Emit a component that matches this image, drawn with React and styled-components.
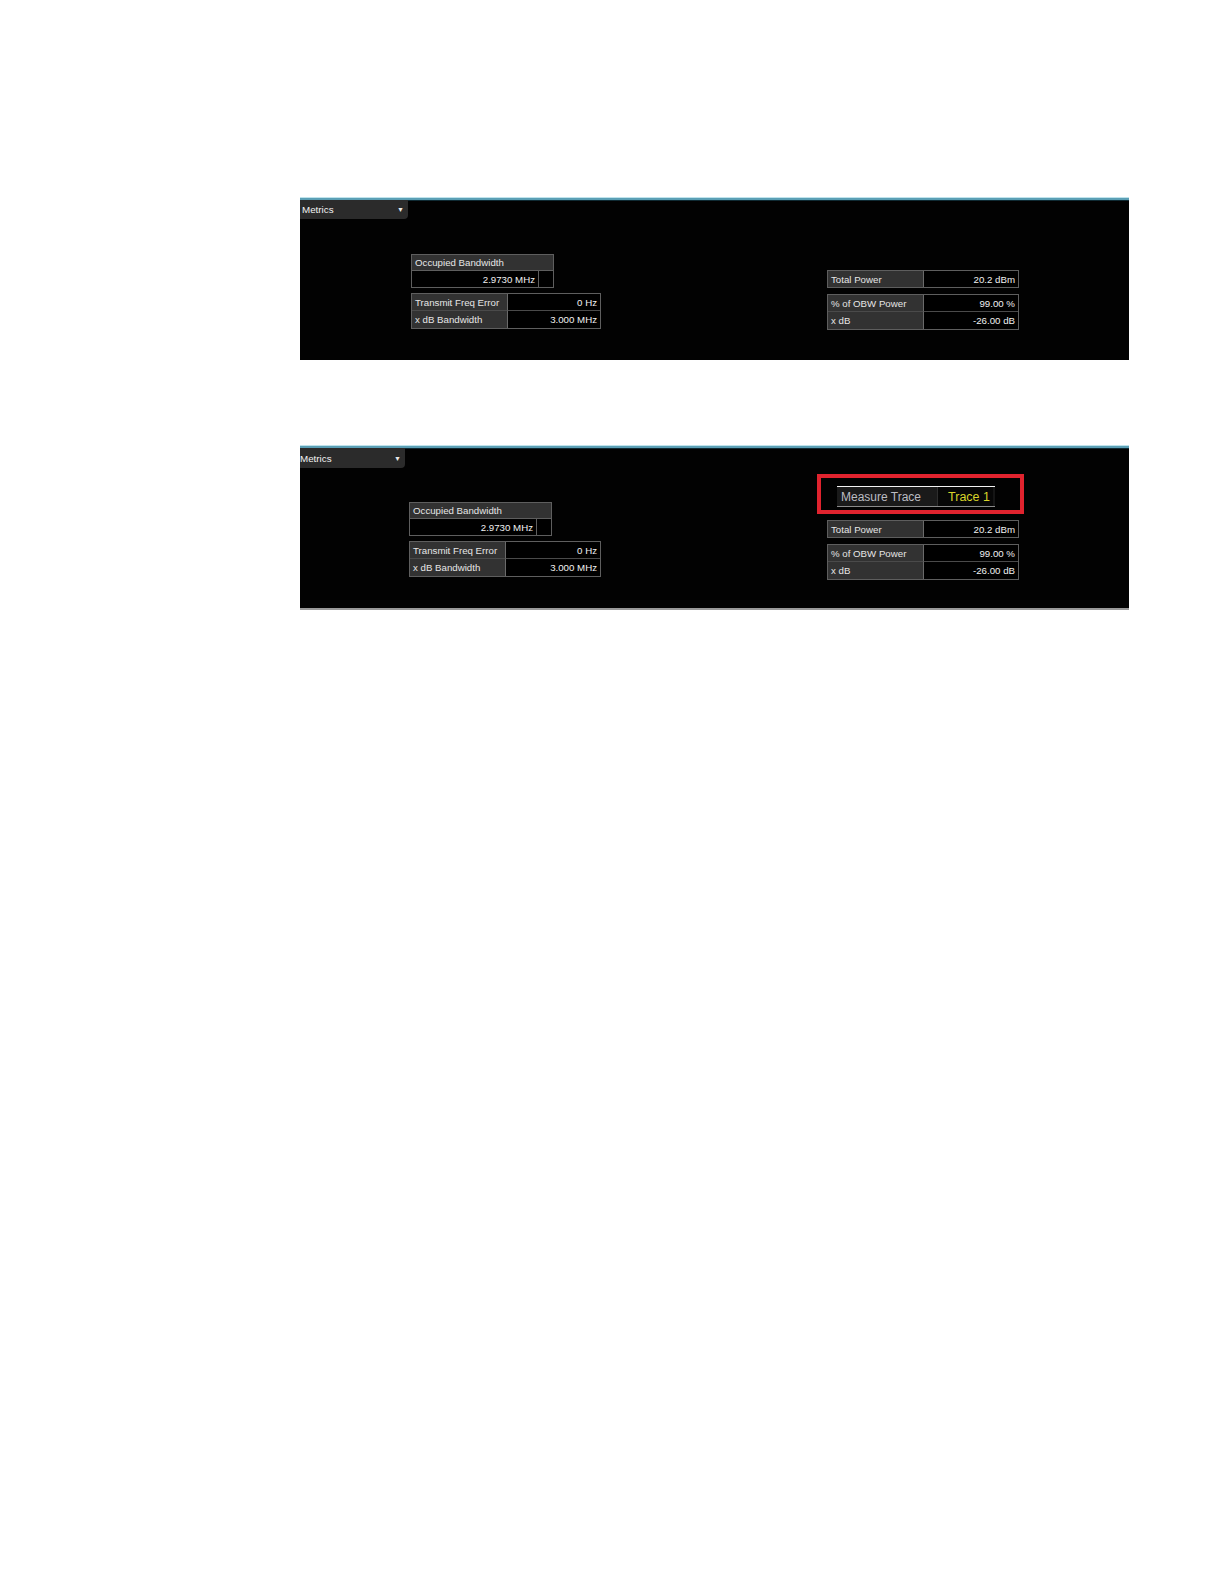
import React from "react";
import styled, { createGlobalStyle } from "styled-components";

const GlobalStyle = createGlobalStyle`
  html, body { margin: 0; padding: 0; background: #ffffff; }
  body { font-family: "Liberation Sans", Arial, sans-serif; }
  * { box-sizing: border-box; }
`;

const Page = styled.div`
  width: 1224px;
  min-height: 1584px;
  background: #fff;
  padding: 197px 0 0 300px;
  display: flex;
  flex-direction: column;
  gap: 85px;
`;

const Panel = styled.section`
  width: 829px;
  height: ${(p) => p.$h}px;
  background: #020202;
  border-top: 3px solid #5b9fb5;
  box-shadow: inset 0 1px 0 #0f2a33;
  border-bottom: ${(p) => (p.$bottomLine ? "2px solid #9a9a9a" : "none")};
  display: flex;
  flex-direction: column;
  position: relative;
`;

const CyanHighlight = styled.div`
  position: absolute;
  left: 0;
  right: 0;
  top: -3px;
  height: 1px;
  background: #bfe3ec;
`;

const MetricsTab = styled.div`
  width: ${(p) => p.$w}px;
  height: ${(p) => p.$h}px;
  background: #2b2b2b;
  border-bottom-right-radius: 4px;
  display: flex;
  align-items: center;
  justify-content: space-between;
  padding: 0 4px 0 ${(p) => p.$pl}px;
  color: #f2f2f2;
  font-size: 9.8px;
`;

const Caret = styled.span`
  font-size: 7px;
  color: #e8e8e8;
`;

const Body = styled.div`
  display: flex;
  align-items: flex-start;
  padding-left: ${(p) => p.$pl}px;
`;

const LeftGroup = styled.div`
  margin-top: ${(p) => p.$mt}px;
  display: flex;
  flex-direction: column;
  gap: 5px;
`;

const RightGroup = styled.div`
  margin-top: ${(p) => p.$mt}px;
  margin-left: ${(p) => p.$ml}px;
  display: flex;
  flex-direction: column;
  align-items: flex-start;
  gap: 6px;
`;

const Tables = styled.div`
  display: flex;
  flex-direction: column;
  gap: 6px;
  margin-left: ${(p) => p.$ml || 0}px;
`;

const OccBox = styled.div`
  width: 143px;
  display: flex;
  flex-direction: column;
  border: 1px solid #5e5e5e;
`;

const OccHeader = styled.div`
  height: ${(p) => p.$h}px;
  background: #323232;
  color: #e6e6e6;
  font-size: 9.7px;
  display: flex;
  align-items: center;
  padding-left: 3px;
  border-bottom: 1px solid #5e5e5e;
`;

const OccValueRow = styled.div`
  height: ${(p) => p.$h}px;
  display: grid;
  grid-template-columns: 1fr 14px;
  background: #000;
`;

const OccValue = styled.div`
  color: #f0f0f0;
  font-size: 9.7px;
  display: flex;
  align-items: center;
  justify-content: flex-end;
  padding-right: 3px;
  border-right: 1px solid #5e5e5e;
`;

const Grid = styled.div`
  width: ${(p) => p.$w}px;
  display: grid;
  grid-template-columns: ${(p) => p.$lw}px 1fr;
  grid-auto-rows: ${(p) => p.$rh}px;
  border: 1px solid #5e5e5e;
  background: #000;
`;

const LabelCell = styled.div`
  background: #323232;
  color: #e6e6e6;
  font-size: 9.7px;
  display: flex;
  align-items: center;
  padding-left: 3px;
  border-right: 1px solid #6a6a6a;
  border-bottom: ${(p) => (p.$last ? "none" : "1px solid #4a4a4a")};
  white-space: nowrap;
`;

const ValueCell = styled.div`
  background: #000;
  color: #f0f0f0;
  font-size: 9.7px;
  display: flex;
  align-items: center;
  justify-content: flex-end;
  padding-right: 3px;
  border-bottom: ${(p) => (p.$last ? "none" : "1px solid #4a4a4a")};
  white-space: nowrap;
`;

const Highlight = styled.div`
  width: 207px;
  height: 40px;
  border: 4px solid #e0232e;
  padding: 8px 0 0 16px;
`;

const TraceWidget = styled.div`
  width: 158px;
  height: 21px;
  display: flex;
  border-top: 1px solid #f2f2f2;
  border-bottom: 1px solid #8a8a8a;
  background: #151515;
`;

const TraceLabel = styled.div`
  width: 101px;
  display: flex;
  align-items: center;
  padding-left: 4px;
  color: #bcbcc2;
  font-size: 12px;
  background: #1a1a1a;
  border-right: 1px solid #2e2e2e;
`;

const TraceValue = styled.div`
  width: 55px;
  display: flex;
  align-items: center;
  justify-content: flex-end;
  padding-right: 3px;
  color: #d8d42a;
  font-size: 12.5px;
  background: #070707;
`;

function DataTable({ rows, width, labelWidth, rowHeight = 17 }) {
  return (
    <Grid $w={width} $lw={labelWidth} $rh={rowHeight}>
      {rows.map(([label, value], i) => {
        const last = i === rows.length - 1;
        return (
          <React.Fragment key={label}>
            <LabelCell $last={last}>{label}</LabelCell>
            <ValueCell $last={last}>{value}</ValueCell>
          </React.Fragment>
        );
      })}
    </Grid>
  );
}

function Occupied() {
  return (
    <OccBox>
      <OccHeader $h={16}>Occupied Bandwidth</OccHeader>
      <OccValueRow $h={16}>
        <OccValue>2.9730 MHz</OccValue>
        <div />
      </OccValueRow>
    </OccBox>
  );
}

function LeftTables({ mt, width }) {
  return (
    <LeftGroup $mt={mt}>
      <Occupied />
      <DataTable
        width={width}
        labelWidth={96}
        rows={[
          ["Transmit Freq Error", "0 Hz"],
          ["x dB Bandwidth", "3.000 MHz"],
        ]}
      />
    </LeftGroup>
  );
}

function RightTables({ ml }) {
  return (
    <Tables $ml={ml}>
      <DataTable width={192} labelWidth={96} rowHeight={16} rows={[["Total Power", "20.2 dBm"]]} />
      <DataTable
        width={192}
        labelWidth={96}
        rows={[
          ["% of OBW Power", "99.00 %"],
          ["x dB", "-26.00 dB"],
        ]}
      />
    </Tables>
  );
}

export default function App() {
  return (
    <>
      <GlobalStyle />
      <Page>
        <Panel $h={163}>
          <CyanHighlight />
          <MetricsTab $w={108} $h={19} $pl={2}>
            <span>Metrics</span>
            <Caret>▼</Caret>
          </MetricsTab>
          <Body $pl={111}>
            <LeftTables mt={35} width={190} />
            <RightGroup $mt={51} $ml={226}>
              <RightTables ml={0} />
            </RightGroup>
          </Body>
        </Panel>

        <Panel $h={165} $bottomLine>
          <CyanHighlight />
          <MetricsTab $w={105} $h={20} $pl={0}>
            <span>Metrics</span>
            <Caret>▼</Caret>
          </MetricsTab>
          <Body $pl={109}>
            <LeftTables mt={34} width={192} />
            <RightGroup $mt={6} $ml={216}>
              <Highlight>
                <TraceWidget>
                  <TraceLabel>Measure Trace</TraceLabel>
                  <TraceValue>Trace 1</TraceValue>
                </TraceWidget>
              </Highlight>
              <RightTables ml={10} />
            </RightGroup>
          </Body>
        </Panel>
      </Page>
    </>
  );
}
